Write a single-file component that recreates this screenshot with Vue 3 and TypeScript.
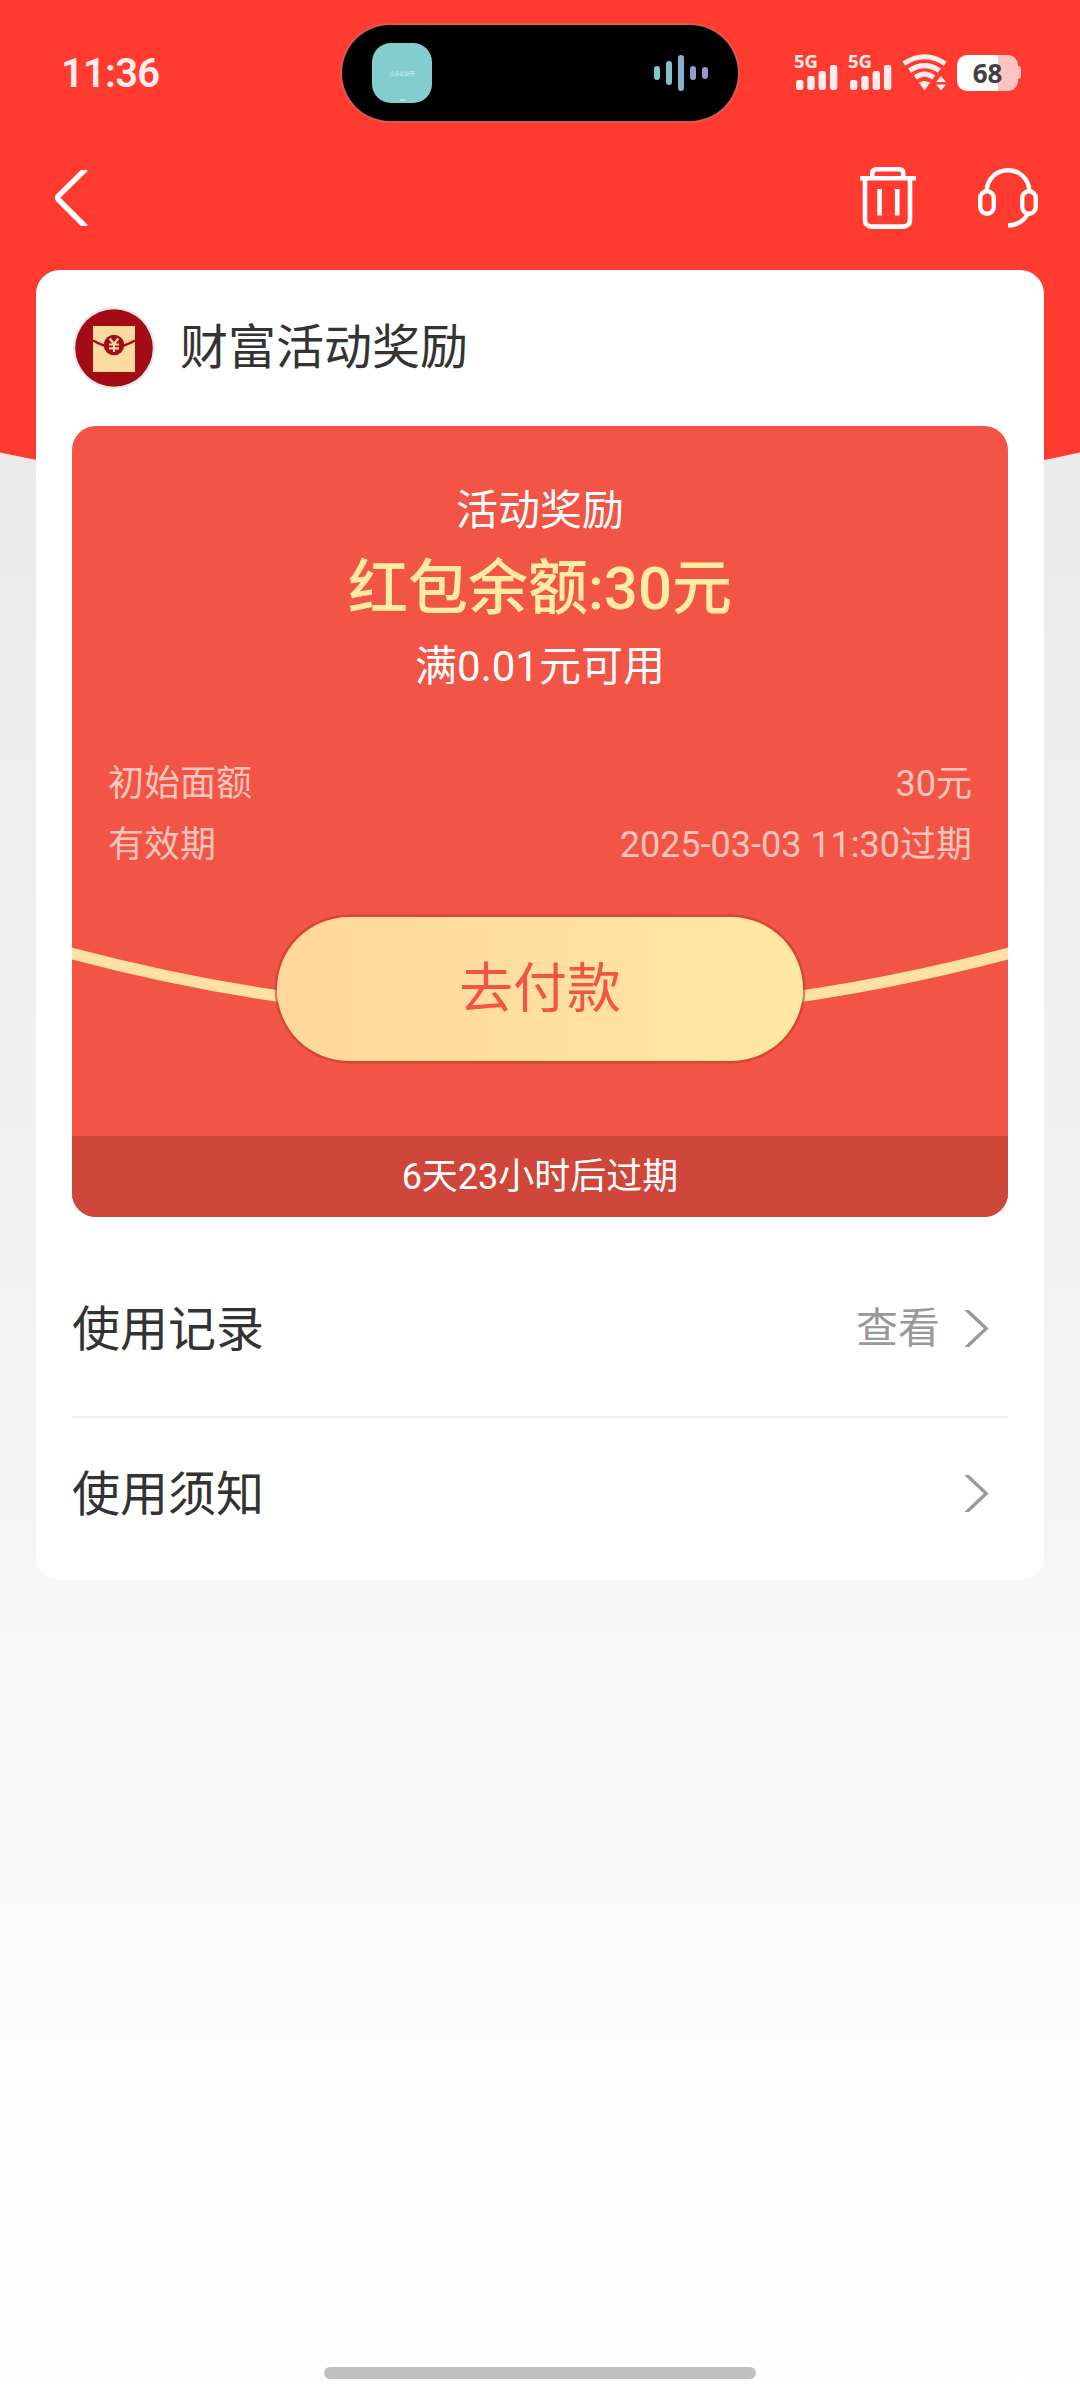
<script setup lang="ts">
interface DetailRow {
  label: string
  value: string
}

interface MenuRow {
  title: string
  action?: string
}

const details: DetailRow[] = [
  { label: '初始面额', value: '30元' },
  { label: '有效期', value: '2025-03-03 11:30过期' },
]

const menu: MenuRow[] = [
  { title: '使用记录', action: '查看' },
  { title: '使用须知' },
]
</script>

<template>
  <div class="page">
    <svg class="backdrop" width="1080" height="540" viewBox="0 0 1080 540">
      <path d="M0 0H1080V452.5Q540 570 0 452.5Z" fill="#ff3b30" />
    </svg>

    <header class="status">
      <span class="clock">11:36</span>
      <div class="island">
        <div class="app"><span class="app-name">· 点击此处开 ·</span><i class="app-dot"></i></div>
        <svg width="54" height="36" viewBox="0 0 54 36">
          <rect x="0" y="11" width="6" height="14" rx="3" fill="#7fc9c8" />
          <rect x="12" y="6" width="6" height="24" rx="3" fill="#82c0cb" />
          <rect x="24" y="0" width="6" height="36" rx="3" fill="#88b0cf" />
          <rect x="36" y="11" width="6" height="14" rx="3" fill="#909fd0" />
          <rect x="48" y="12" width="6" height="12" rx="3" fill="#9896d0" />
        </svg>
      </div>
      <div class="indicators">
        <div v-for="n in 2" :key="n" class="signal">
          <span class="gen">5G</span>
          <svg width="42" height="27" viewBox="0 0 42 27" fill="#ffeceb">
            <rect x="0" y="15" width="7.4" height="10" rx="2.4" />
            <rect x="11.3" y="11" width="7.4" height="14" rx="2.4" />
            <rect x="22.6" y="6" width="7.4" height="19" rx="2.4" />
            <rect x="33.9" y="0" width="7.4" height="25" rx="2.4" />
          </svg>
        </div>
        <svg class="wifi" width="46" height="38" viewBox="0 0 46 38">
          <g fill="none" stroke="#ffeceb" stroke-width="5">
            <path d="M1.8 9.6Q22.5 -4.2 43.2 9.6" />
            <path d="M7.6 16.6Q22.5 6.6 37.4 16.6" />
            <path d="M13.2 23.4Q22.5 16.8 31.8 23.4" />
          </g>
          <path d="M17.5 28.6Q22.5 26.6 27.5 28.6L22.5 35.8Z" fill="#ffeceb" stroke="#ffeceb" stroke-width="1" stroke-linejoin="round" />
          <path d="M34 28L39 22L44 28ZM34 30.5H44L39 36.5Z" fill="#ffeceb" />
        </svg>
        <div class="battery"><span>68</span></div>
      </div>
    </header>

    <nav class="nav">
      <svg width="36" height="56" viewBox="0 0 36 56" fill="none" stroke="#fff" stroke-width="5.4">
        <path d="M31.8 -1L4.2 26.2Q3 27.8 4.2 29.4L31.8 57" />
      </svg>
      <div class="tools">
        <svg width="56" height="62" viewBox="0 0 56 62" fill="none" stroke="#fff" stroke-width="4.6">
          <path d="M0 11.3H56M12.3 11V6.3Q12.3 2.3 16.3 2.3H39.2Q43.2 2.3 43.2 6.3V11M5 12V52.6Q5 59.6 12 59.6H43Q50 59.6 50 52.6V12M19.6 22V48.6M37.2 22V48.6" />
        </svg>
        <svg width="60" height="60" viewBox="0 0 60 60" fill="none" stroke="#fff" stroke-width="4.4">
          <rect x="2.2" y="23.2" width="13.6" height="22.6" rx="6.8" />
          <rect x="44.2" y="23.2" width="13.6" height="22.6" rx="6.8" />
          <path d="M8.5 23C9.5 11 18 2.2 30 2.2S50.5 11 51.5 23M50 45.5Q43.5 57.3 30 57.5" />
        </svg>
      </div>
    </nav>

    <main class="card">
      <div class="issuer">
        <svg width="84" height="84" viewBox="0 0 84 84">
          <circle cx="42" cy="42" r="41" fill="#eee9ea" />
          <circle cx="42" cy="42" r="38.8" fill="#a30c16" />
          <path d="M21 20H63V66H21Z" fill="#fddaa0" />
          <path d="M21 34.5Q32 41 42 41T63 34.5" fill="none" stroke="#a30c16" stroke-width="2.6" />
          <circle cx="42" cy="39" r="10.3" fill="#a30c16" />
          <path d="M37.7 32.5L42 38L46.3 32.5M42 38V46M37 38.5H47M37 42.3H47" fill="none" stroke="#fddaa0" stroke-width="2.2" />
        </svg>
        <h1>财富活动奖励</h1>
      </div>

      <section class="coupon">
        <div class="summary">
          <div class="kind">活动奖励</div>
          <div class="balance">红包余额:30元</div>
          <div class="rule">满0.01元可用</div>
        </div>
        <div class="details">
          <div v-for="row in details" :key="row.label" class="detail">
            <span>{{ row.label }}</span>
            <span>{{ row.value }}</span>
          </div>
        </div>
        <div class="pay-area">
          <svg class="ribbon" width="936" height="130" viewBox="0 0 936 130">
            <path d="M-20 34.1L0 39.5Q468 163.5 936 39.5L956 34.1" fill="none" stroke="#ffe1a5" stroke-width="11.6" />
          </svg>
          <button class="pay" type="button">去付款</button>
        </div>
        <div class="expiry">6天23小时后过期</div>
      </section>

      <div class="menu">
        <div v-for="item in menu" :key="item.title" class="item">
          <span class="item-title">{{ item.title }}</span>
          <span v-if="item.action" class="item-action">{{ item.action }}</span>
          <svg width="24" height="37" viewBox="0 0 24 37" fill="none" stroke="#999" stroke-width="3.4">
            <path d="M0.5 -1L21.2 18.5L0.5 38" />
          </svg>
        </div>
      </div>
    </main>

    <div class="home"></div>
  </div>
</template>

<style>
body {
  margin: 0;
}
</style>

<style scoped>
.page {
  position: relative;
  box-sizing: border-box;
  display: flex;
  flex-direction: column;
  width: 1080px;
  height: 2400px;
  overflow: hidden;
  background: linear-gradient(180deg, #ebebeb 450px, #f2f2f2 1250px, #f7f7f7 1600px, #fdfdfd 2100px, #fefefe 2400px);
  font-family: Roboto, "Noto Sans CJK SC", sans-serif;
  color: #333;
}

.backdrop {
  position: absolute;
  top: 0;
  left: 0;
}

.status {
  position: relative;
  display: grid;
  grid-template-columns: 281px 396px 284px;
  align-items: center;
  height: 146px;
  padding-left: 61px;
}

.clock {
  padding-top: 1px;
  font-size: 40px;
  font-weight: 600;
  line-height: 48px;
  letter-spacing: -0.8px;
  color: #ffeceb;
}

.island {
  display: flex;
  align-items: center;
  justify-content: space-between;
  box-sizing: border-box;
  width: 396px;
  height: 96px;
  padding: 0 30px;
  border-radius: 48px;
  background: #000;
  box-shadow: 0 0 0 2px #e2584f;
}

.app {
  display: flex;
  flex-direction: column;
  align-items: center;
  width: 60px;
  height: 60px;
  border-radius: 19px;
  background: #84cdcf;
}

.app-name {
  height: 56px;
  font-size: 5px;
  line-height: 60px;
  white-space: nowrap;
  color: #d3efef;
}

.app-dot {
  width: 5px;
  height: 2px;
  background: #b8e6e4;
}

.indicators {
  display: flex;
  align-items: center;
  height: 38px;
  padding-left: 56px;
}

.signal {
  display: flex;
  flex-direction: column;
  justify-content: space-between;
  width: 54px;
  height: 38px;
}

.signal svg {
  margin-left: 1.5px;
}

.gen {
  height: 11px;
  font-family: "Noto Sans", sans-serif;
  font-size: 18.5px;
  font-weight: 700;
  line-height: 14px;
  color: #ffeceb;
}

.battery {
  position: relative;
  display: flex;
  align-items: center;
  justify-content: center;
  box-sizing: border-box;
  width: 61px;
  height: 36px;
  margin-left: 9px;
  border-radius: 10px;
  background: linear-gradient(90deg, #fff 40.5px, #ffc4c1 40.5px);
  font-family: "Noto Sans", sans-serif;
  font-size: 26px;
  font-weight: 700;
  line-height: 36px;
  color: #404040;
}

.battery::after {
  content: "";
  position: absolute;
  left: 61px;
  top: 11px;
  width: 3px;
  height: 13px;
  border-radius: 0 3px 3px 0;
  background: #ffc4c1;
}

.nav {
  position: relative;
  display: flex;
  align-items: center;
  justify-content: space-between;
  height: 103px;
  padding: 0 42px 0 54px;
}

.tools {
  display: flex;
  align-items: center;
  gap: 62px;
}

.card {
  position: relative;
  box-sizing: border-box;
  width: 1008px;
  height: 1310px;
  margin: 21px 36px 0;
  padding: 0 36px;
  border-radius: 24px;
  background: #fff;
}

.issuer {
  display: flex;
  align-items: center;
  gap: 24px;
  height: 156px;
}

.issuer h1 {
  margin: 0;
  font-size: 48px;
  font-weight: 400;
  line-height: 60px;
}

.coupon {
  height: 791px;
  overflow: hidden;
  border-radius: 24px;
  background: #f25445;
}

.summary {
  padding-top: 55px;
  text-align: center;
  color: #fff;
}

.kind,
.rule {
  font-size: 42px;
  line-height: 60px;
}

.balance {
  font-size: 60px;
  font-weight: 500;
  line-height: 96px;
  color: #ffeba2;
}

.details {
  padding: 57px 36px 0;
}

.detail {
  display: flex;
  justify-content: space-between;
  font-size: 36px;
  line-height: 61px;
  color: #ffc5bd;
}

.pay-area {
  position: relative;
  display: flex;
  justify-content: center;
  height: 219px;
  padding-top: 41px;
}

.ribbon {
  position: absolute;
  left: 0;
  top: 38px;
}

.pay {
  position: relative;
  width: 526px;
  height: 144px;
  padding: 2px 0 0;
  border: 0;
  border-radius: 72px;
  background: linear-gradient(90deg, #ffd79c, #ffe8a4);
  box-shadow: 0 0 0 2.5px rgba(190, 65, 45, 0.6);
  font: 400 54px/140px Roboto, "Noto Sans CJK SC", sans-serif;
  color: #f25445;
}

.expiry {
  height: 81px;
  background: #cf463a;
  font-size: 36px;
  line-height: 83px;
  text-align: center;
  color: #fff;
}

.menu {
  padding-top: 58px;
}

.item {
  display: flex;
  align-items: center;
  height: 107px;
  padding-right: 19px;
}

.item + .item {
  position: relative;
  height: 107px;
  margin-top: 34px;
  padding-top: 22px;
  border-top: 2px solid #eee;
}

.item-title {
  flex: 1;
  padding-top: 2px;
  font-size: 48px;
  line-height: 60px;
}

.item-action {
  margin-right: 25px;
  padding-top: 1px;
  font-size: 42px;
  line-height: 60px;
  color: #999;
}

.home {
  width: 432px;
  height: 12px;
  margin: auto auto 21px;
  border-radius: 6px;
  background: #c0c0c0;
}
</style>
